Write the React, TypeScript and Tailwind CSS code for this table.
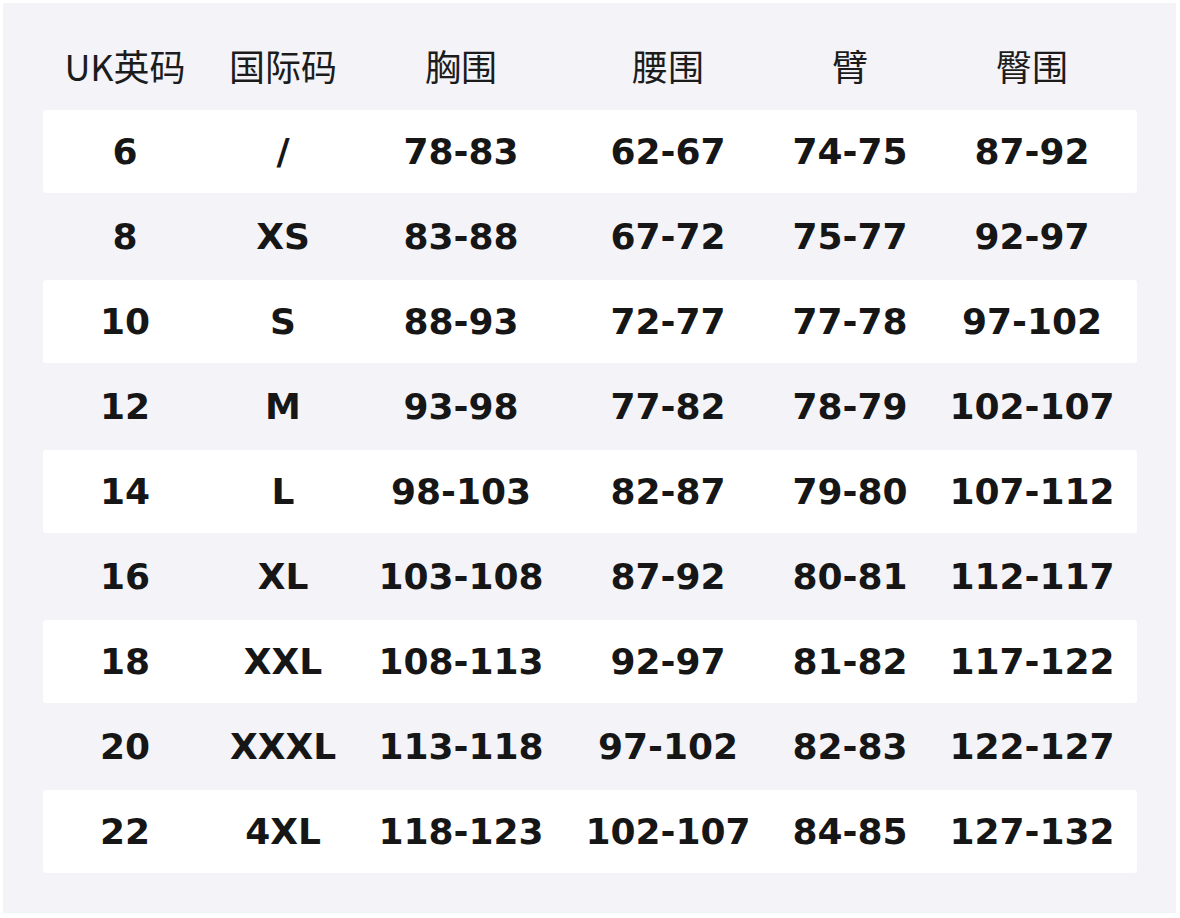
import React from "react";

const headers = ["UK英码", "国际码", "胸围", "腰围", "臂", "臀围"];
const rows: string[][] = [
  ["6", "/", "78-83", "62-67", "74-75", "87-92"],
  ["8", "XS", "83-88", "67-72", "75-77", "92-97"],
  ["10", "S", "88-93", "72-77", "77-78", "97-102"],
  ["12", "M", "93-98", "77-82", "78-79", "102-107"],
  ["14", "L", "98-103", "82-87", "79-80", "107-112"],
  ["16", "XL", "103-108", "87-92", "80-81", "112-117"],
  ["18", "XXL", "108-113", "92-97", "81-82", "117-122"],
  ["20", "XXXL", "113-118", "97-102", "82-83", "122-127"],
  ["22", "4XL", "118-123", "102-107", "84-85", "127-132"],
];

const cols = "grid grid-cols-[164px_152px_204px_210px_154px_210px]";

export default function App() {
  return (
    <div className="w-[1180px] h-[918px] bg-white pt-[3px] pl-[3px] pr-[4px] pb-[5px]">
      <div className="w-full h-full bg-[#f3f3f8] pt-[20px] pl-[40px] pr-[39px] pb-[38px]">
        <div
          className={`${cols} h-[87px] items-center text-[36px] text-[#1c1c1c]`}
          style={{ fontFamily: '"Noto Sans CJK SC", "Noto Sans", sans-serif' }}
        >
          {headers.map((h) => (
            <div key={h} className="text-center leading-none pb-[4px]">
              {h}
            </div>
          ))}
        </div>
        {rows.map((r, i) => (
          <div
            key={i}
            className={`${cols} items-center text-[36px] font-bold text-[#161616] ${
              i % 2 === 0 ? "bg-white h-[83px] mb-[2px] rounded-[3px]" : "h-[85px] pb-[2px]"
            }`}
            style={{ fontFamily: '"DejaVu Sans", sans-serif' }}
          >
            {r.map((c, j) => (
              <div key={j} className="text-center leading-none pt-[1px]">
                {c}
              </div>
            ))}
          </div>
        ))}
      </div>
    </div>
  );
}
